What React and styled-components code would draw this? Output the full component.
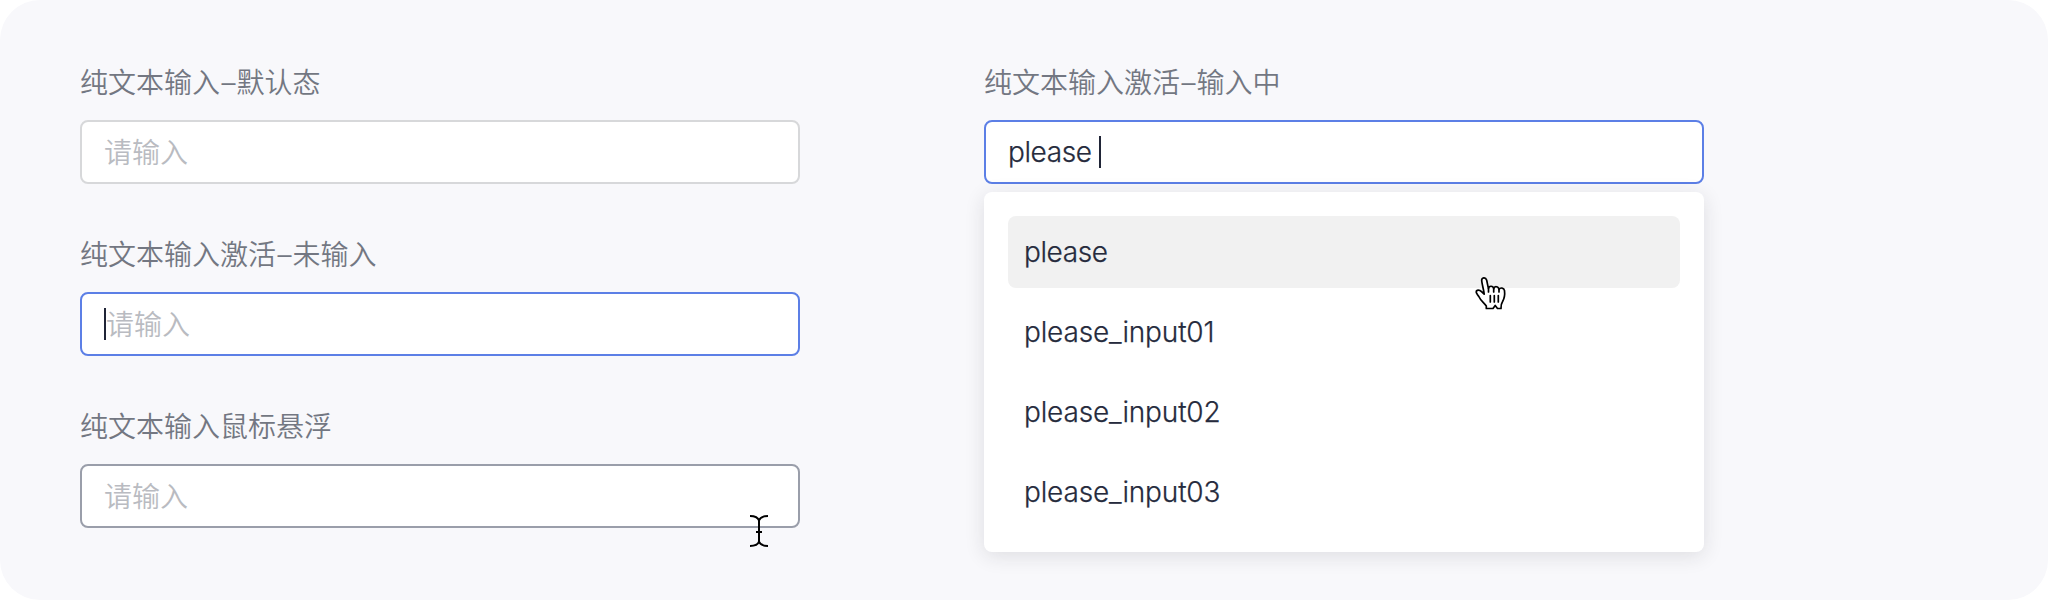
import React from 'react';
import styled, { createGlobalStyle } from 'styled-components';

const GlobalStyle = createGlobalStyle`
  * { box-sizing: border-box; }
  body {
    margin: 0;
    background: #fff;
    font-family: Inter, "Noto Sans CJK SC", sans-serif;
    font-size: 28px;
    font-weight: 350;
  }
`;

const borders = { default: '#d7d8da', active: '#5c7fe6', hover: '#9a9eaa' };

const Board = styled.main`
  display: flex;
  gap: 184px;
  height: 600px;
  padding: 60px 80px 0;
  border-radius: 40px;
  background: #f8f8fb;
`;

const Column = styled.section`
  display: flex;
  flex-direction: column;
  gap: 48px;
  width: 720px;
`;

const Field = styled.div`
  display: flex;
  flex-direction: column;
  gap: 16px;
`;

const Label = styled.label`
  height: 44px;
  padding-top: 1px;
  line-height: 44px;
  color: #737782;
  white-space: nowrap;
`;

const Dash = styled.span`
  padding: 0 1.2px 0 1.4px;
`;

const InputBox = styled.div`
  display: flex;
  align-items: center;
  height: 64px;
  padding: 0 22px;
  border: 2px solid ${({ $state }) => borders[$state]};
  border-radius: 8px;
  background: #fff;
  line-height: 40px;
`;

const Placeholder = styled.span`
  padding-top: 2px;
  color: #b9bbc1;
`;

const Latin = styled.span`
  color: #262b3d;
  font-weight: 300;
  -webkit-text-stroke: 0.25px #262b3d;
  letter-spacing: ${({ $loose }) => ($loose ? '-0.15px' : '-0.4px')};
  white-space: pre;
`;

const Caret = styled.i`
  width: 2px;
  height: 32px;
  background: #202537;
`;

const FieldWithMenu = styled.div`
  display: flex;
  flex-direction: column;
  gap: 8px;
`;

const Menu = styled.ul`
  display: flex;
  flex-direction: column;
  gap: 8px;
  margin: 0;
  padding: 24px;
  list-style: none;
  border-radius: 8px;
  background: #fff;
  box-shadow: 0 4px 20px rgba(31, 35, 41, 0.12);
`;

const MenuItem = styled.li`
  display: flex;
  align-items: center;
  height: 72px;
  padding: 0 16px;
  border-radius: 8px;
  background: ${({ $hovered }) => ($hovered ? '#f1f1f1' : 'transparent')};
`;

const Pointer = styled.svg`
  position: absolute;
  left: ${({ $x }) => $x}px;
  top: ${({ $y }) => $y}px;
  fill: none;
  stroke: #000;
`;

const TextCursor = () => (
  <Pointer $x={748} $y={512} width="22" height="38" viewBox="0 0 22 38" strokeWidth="2">
    <path d="M2 4C7 4 10 5.500 11 8.500C12 5.500 15 4 20 4M11 8V30M8 20H14M2 34C7 34 10 32.500 11 29.500C12 32.500 15 34 20 34" />
  </Pointer>
);

const HandCursor = () => (
  <Pointer $x={1474} $y={275} width="34" height="36" viewBox="0 0 34 36" strokeWidth="1.7" strokeLinejoin="round" strokeLinecap="round">
    <path
      fill="#fff"
      d="M12.3 33.5V31C9.800 27.500 6.500 25.400 4.800 21.500C3.700 19.600 2.400 18.700 2.200 17.200C2 15.500 4 14.600 5.900 15.500C7.600 16.300 9 17.900 10.200 19.200C10 15.500 8 9.500 7.700 5.800C7.500 2.300 11.600 1.800 12.600 5C13.300 7.600 13.700 10.800 14.500 13.500C14.900 10.700 19 10.300 19.700 13.700C20.500 10.800 24.400 11.100 25 14.500C26.200 12.200 30 12.600 30.500 15.600C31 19.500 30 24 28.600 26.500C27.200 28.600 26.800 31 27 33.500H23.500L21.200 30.500L19 33.500Z"
    />
    <path d="M14.500 13.500V17M19.700 13.700V17M25 14.500V17M16.300 20.500V27M20.300 20.500V27M24.300 20.500V27" />
  </Pointer>
);

const options = ['please', 'please_input01', 'please_input02', 'please_input03'];

export default function App() {
  return (
    <>
      <GlobalStyle />
      <Board>
        <Column>
          <Field>
            <Label>纯文本输入<Dash>–</Dash>默认态</Label>
            <InputBox $state="default"><Placeholder>请输入</Placeholder></InputBox>
          </Field>
          <Field>
            <Label>纯文本输入激活<Dash>–</Dash>未输入</Label>
            <InputBox $state="active"><Caret /><Placeholder>请输入</Placeholder></InputBox>
          </Field>
          <Field>
            <Label>纯文本输入鼠标悬浮</Label>
            <InputBox $state="hover"><Placeholder>请输入</Placeholder></InputBox>
          </Field>
        </Column>
        <Column>
          <Field>
            <Label>纯文本输入激活<Dash>–</Dash>输入中</Label>
            <FieldWithMenu>
              <InputBox $state="active"><Latin>{'please '}</Latin><Caret /></InputBox>
              <Menu>
                {options.map((text, i) => (
                  <MenuItem key={text} $hovered={i === 0}><Latin $loose={i > 0}>{text}</Latin></MenuItem>
                ))}
              </Menu>
            </FieldWithMenu>
          </Field>
        </Column>
      </Board>
      <TextCursor />
      <HandCursor />
    </>
  );
}
